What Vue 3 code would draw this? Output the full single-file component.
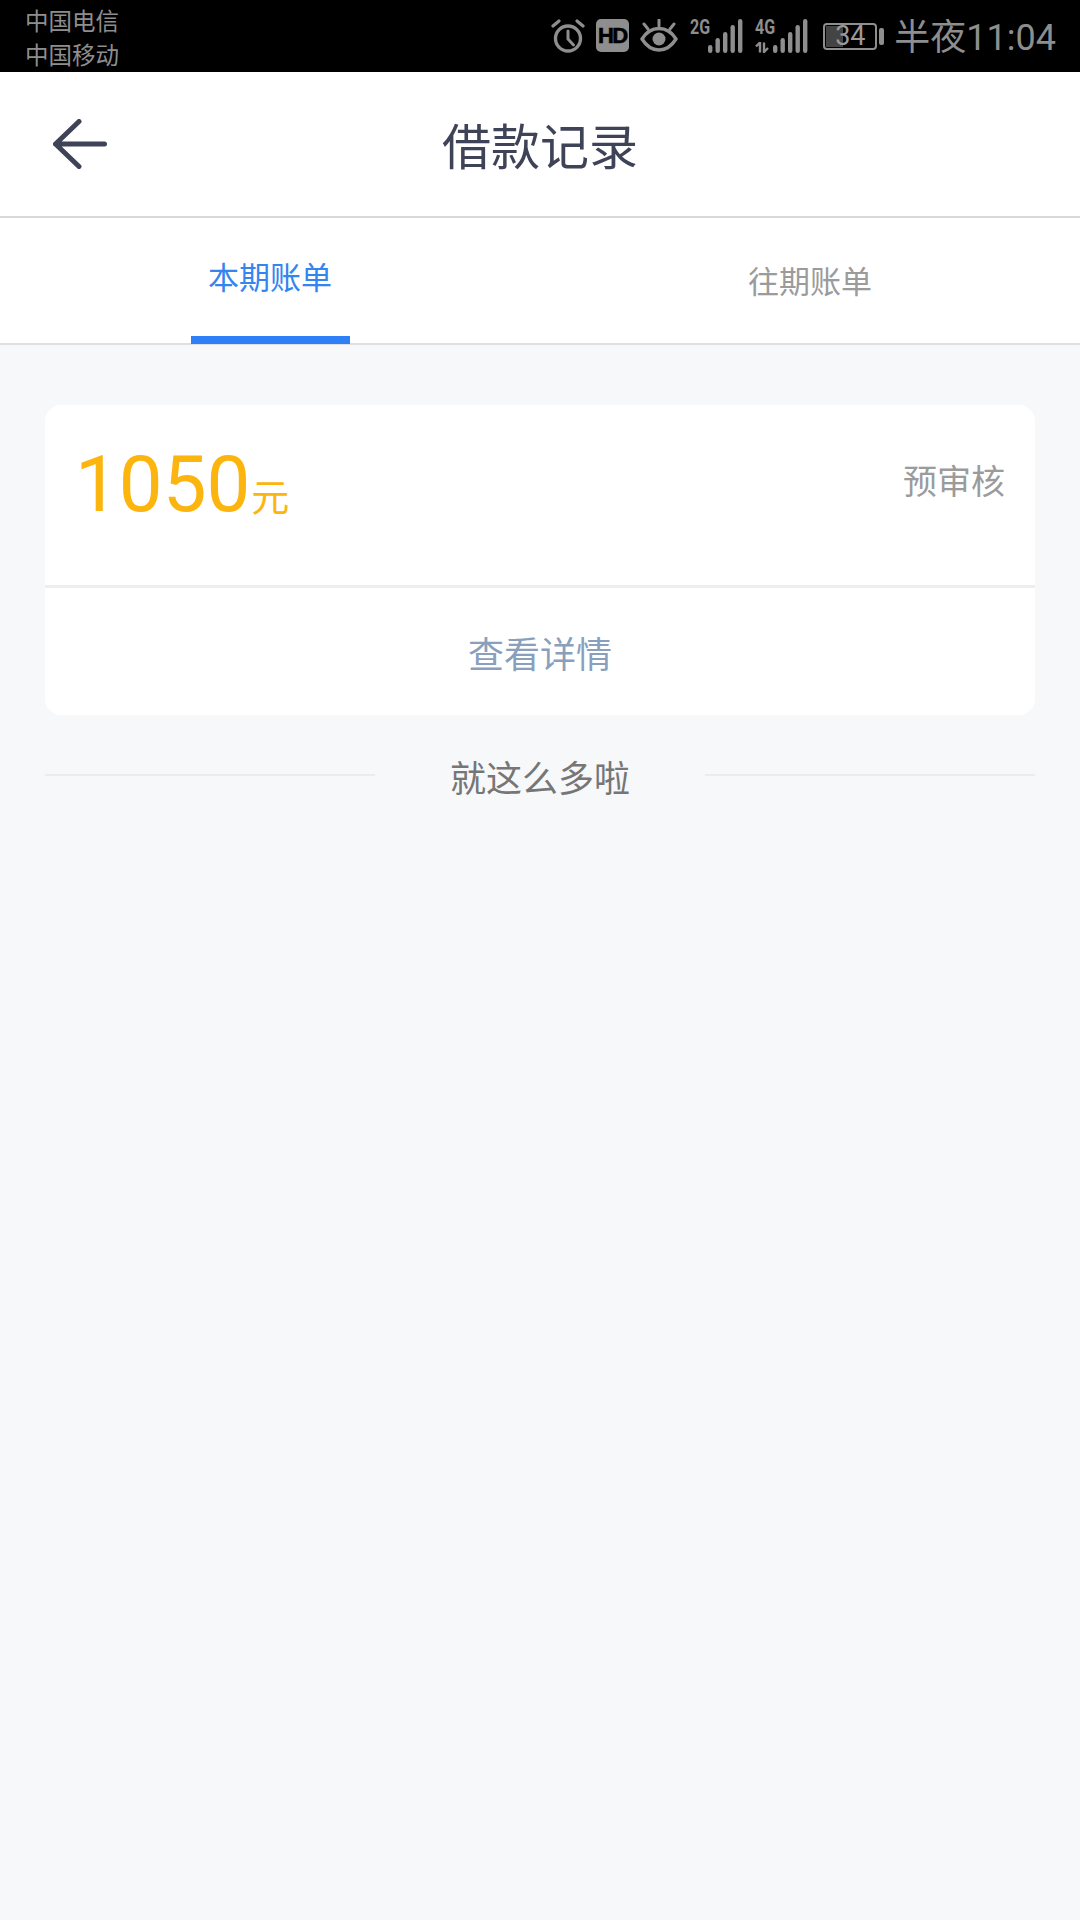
<template>
  <div class="page">
    <div class="status">
      <div class="carriers">
        <div>中国电信</div>
        <div>中国移动</div>
      </div>
      <div class="indicators">
        <svg class="alarm" width="34" height="34" viewBox="0 0 34 34" fill="none" stroke="#8e8e8e" stroke-linecap="round">
          <circle cx="17" cy="19.5" r="12.5" stroke-width="3.4" />
          <path d="M17 12v8l5.5 6" stroke-width="3" stroke-linejoin="round" />
          <path d="M2 7l6-5M32 7l-6-5" stroke-width="3.2" />
        </svg>
        <div class="hd">HD</div>
        <svg class="eye" width="38" height="33" viewBox="0 0 38 33">
          <path d="M2 20C7 12 12 9.500 19 9.500S31 12 36 20C31 28 26 31 19 31S7 28 2 20Z" fill="none" stroke="#8e8e8e" stroke-width="3.400" stroke-linejoin="round" />
          <circle cx="19" cy="20" r="6.500" fill="#8e8e8e" />
          <path d="M19 1v6M4 5l4 5M34 5l-4 5" stroke="#8e8e8e" stroke-width="3" stroke-linecap="round" />
        </svg>
        <div class="signal">
          <span class="net">2G</span>
          <svg class="bars" width="36" height="34" viewBox="0 0 36 34">
            <rect v-for="b in bars" :key="b.x" :x="b.x" :y="b.y" width="4.400" :height="34 - b.y" rx="2.200" fill="#8e8e8e" />
          </svg>
        </div>
        <div class="signal second">
          <span class="net">4G</span>
          <svg class="arrows" width="18" height="11" viewBox="0 0 18 11">
            <path d="M1 4.500L5 .5V10.500M9 .5V10L13 6" fill="none" stroke="#8e8e8e" stroke-width="2.400" />
          </svg>
          <svg class="bars" width="36" height="34" viewBox="0 0 36 34">
            <rect v-for="b in bars" :key="b.x" :x="b.x" :y="b.y" width="4.400" :height="34 - b.y" rx="2.200" fill="#8e8e8e" />
          </svg>
        </div>
        <div class="battery">
          <div class="cell">
            <div class="charge"></div>
            <span class="level">34</span>
          </div>
          <div class="tip"></div>
        </div>
        <div class="clock">半夜11:04</div>
      </div>
    </div>

    <header class="header">
      <svg class="back" width="54" height="50" viewBox="0 0 54 50" fill="none" stroke="#3e4357" stroke-width="5" stroke-linecap="round" stroke-linejoin="round">
        <path d="M26 2.500L2.500 25 26 47.500M2.500 25H51.500" />
      </svg>
      <h1 class="title">借款记录</h1>
      <span></span>
    </header>

    <nav class="tabs">
      <div class="tab active">
        <span class="tab-label">本期账单</span>
        <span class="tab-line"></span>
      </div>
      <div class="tab">
        <span class="tab-label">往期账单</span>
      </div>
    </nav>

    <main class="content">
      <section class="card">
        <div class="card-top">
          <div class="amount">
            <span class="num">1050</span><span class="unit">元</span>
          </div>
          <div class="state">预审核</div>
        </div>
        <div class="card-link">查看详情</div>
      </section>
      <div class="end">
        <span class="end-line"></span>
        <span class="end-text">就这么多啦</span>
        <span class="end-line"></span>
      </div>
    </main>
  </div>
</template>

<script setup>
const bars = [
  { x: 0, y: 26 },
  { x: 7.5, y: 19 },
  { x: 15, y: 13 },
  { x: 22.5, y: 6 },
  { x: 30, y: 0 },
]
</script>

<style>
html, body { margin: 0; padding: 0; background: #f7f8fa; }
</style>

<style scoped>
.page {
  width: 1080px;
  height: 1920px;
  overflow: hidden;
  background: #f7f8fa;
  display: flex;
  flex-direction: column;
  font-family: "Noto Sans CJK SC", "Noto Sans", sans-serif;
}
.status {
  height: 72px;
  flex: none;
  background: #000;
  color: #8e8e8e;
  display: flex;
  justify-content: space-between;
  align-items: flex-start;
  padding-left: 25px;
  padding-right: 24px;
  box-sizing: border-box;
}
.carriers {
  font-size: 23.500px;
  line-height: 34px;
  padding-top: 3px;
}
.indicators {
  display: flex;
  align-items: flex-start;
  padding-top: 19px;
}
.hd {
  width: 33px;
  height: 33px;
  margin-left: 11px;
  border-radius: 5px;
  background: #8e8e8e;
  color: #000;
  font: 700 22px/33px "Liberation Sans", sans-serif;
  -webkit-text-stroke: 0.6px #000;
  text-align: center;
  letter-spacing: -1.500px;
}
.eye { margin-left: 11px; }
.signal {
  display: flex;
  position: relative;
  margin-left: 12px;
  width: 54.500px;
  height: 34px;
}
.second { margin-left: 10.500px; }
.net {
  display: inline-block;
  height: 17px;
  font: 700 20px/17px Roboto, sans-serif;
  color: #8e8e8e;
  transform: scaleX(0.8);
  transform-origin: left center;
}
.bars {
  position: absolute;
  right: 0;
  top: 0;
}
.arrows {
  position: absolute;
  left: 0;
  top: 23px;
}
.battery {
  display: flex;
  align-items: center;
  margin-left: 14px;
  margin-top: 4px;
}
.cell {
  width: 54px;
  height: 27px;
  border: 2px solid #8e8e8e;
  border-radius: 4px;
  box-sizing: border-box;
  position: relative;
  display: flex;
  justify-content: center;
  align-items: center;
}
.charge {
  position: absolute;
  left: 1px;
  top: 1px;
  bottom: 1px;
  width: 17px;
  background: #444;
}
.level {
  position: relative;
  font: 400 27px/23px Roboto, sans-serif;
  color: #9a9a9a;
}
.tip {
  width: 5px;
  height: 17px;
  margin-left: 2px;
  background: #8e8e8e;
  border-radius: 2px;
}
.clock {
  font-size: 36px;
  line-height: 34px;
  margin-left: 10px;
  margin-top: 2px;
  font-family: Roboto, "Noto Sans CJK SC", sans-serif;
}
.header {
  height: 146px;
  flex: none;
  background: #fff;
  border-bottom: 2px solid #d9d9d9;
  box-sizing: border-box;
  display: grid;
  grid-template-columns: 1fr auto 1fr;
  align-items: center;
  padding: 0 53px;
}
.title {
  margin: 0;
  font-size: 49px;
  font-weight: 400;
  line-height: 58px;
  color: #3e4357;
}
.tabs {
  height: 127px;
  flex: none;
  display: flex;
  background: #fff;
  border-bottom: 2px solid #dfdfdf;
  box-sizing: border-box;
}
.tab {
  flex: 1;
  display: flex;
  flex-direction: column;
  align-items: center;
  padding-top: 41px;
  color: #9b9b9b;
}
.tab.active {
  padding-top: 37px;
  color: #3585ee;
}
.tab-label {
  font-size: 31px;
  line-height: 42px;
}
.tab-line {
  width: 159px;
  height: 8px;
  margin-top: auto;
  margin-bottom: -1px;
  background: #2f80f6;
}
.content {
  padding: 60px 45px 0;
}
.card {
  background: #fff;
  border-radius: 16px;
}
.card-top {
  height: 183px;
  box-sizing: border-box;
  border-bottom: 3px solid #eeeeee;
  display: flex;
  justify-content: space-between;
  padding: 35px 30px 0 30px;
}
.amount {
  display: flex;
  align-items: baseline;
  color: #fcb40f;
  height: 90px;
}
.num {
  font: 400 78px/90px Roboto, sans-serif;
}
.unit {
  font-size: 38px;
  line-height: 50px;
  margin-left: 1px;
}
.state {
  font-size: 34px;
  line-height: 48px;
  color: #9b9b9b;
  padding-top: 16px;
}
.card-link {
  height: 127px;
  display: flex;
  align-items: center;
  justify-content: center;
  font-size: 36px;
  color: #8a9fbc;
}
.end {
  display: flex;
  align-items: center;
  justify-content: space-between;
  margin-top: 36px;
  height: 50px;
}
.end-line {
  width: 330px;
  height: 2px;
  margin-top: -2px;
  background: #ebecee;
}
.end-text {
  font-size: 36px;
  line-height: 50px;
  color: #767676;
}
</style>
